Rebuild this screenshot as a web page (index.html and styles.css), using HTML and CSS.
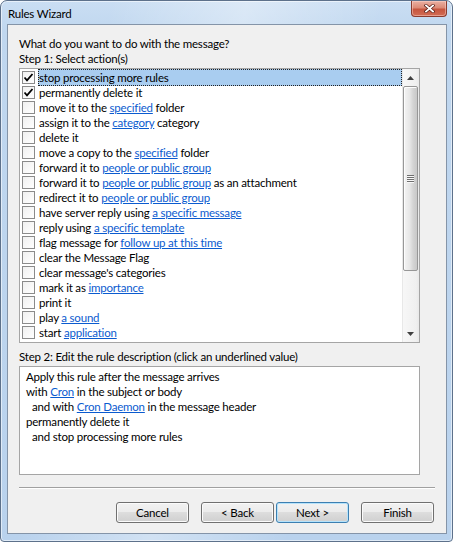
FILE: index.html
```html
<!DOCTYPE html>
<html>
<head>
<meta charset="utf-8">
<title>Rules Wizard</title>
<link rel="stylesheet" href="styles.css">
</head>
<body>
<div class="window">
  <div class="titlebar">
    <span class="title">Rules Wizard</span>
    <div class="close">
      <svg width="11" height="9" viewBox="0 0 11 9">
        <path d="M2 1.5 L9 7.5 M9 1.5 L2 7.5" stroke="#5a2018" stroke-width="3.2" stroke-linecap="square"/>
        <path d="M2 1.5 L9 7.5 M9 1.5 L2 7.5" stroke="#ffffff" stroke-width="1.8" stroke-linecap="square"/>
      </svg>
    </div>
  </div>
  <div class="client">
    <div class="label">What do you want to do with the message?</div>
    <div class="label">Step 1: Select action(s)</div>
    <div class="listbox">
      <ul class="items">
        <li class="item"><span class="cb checked"><svg width="11" height="11" viewBox="0 0 11 11"><path d="M1.5 5.5 L4 8.3 L9.5 2" fill="none" stroke="#000" stroke-width="1.8"/></svg></span><span class="txt selected">stop processing more rules</span></li>
        <li class="item"><span class="cb checked"><svg width="11" height="11" viewBox="0 0 11 11"><path d="M1.5 5.5 L4 8.3 L9.5 2" fill="none" stroke="#000" stroke-width="1.8"/></svg></span><span class="txt">permanently delete it</span></li>
        <li class="item"><span class="cb"></span><span class="txt">move it to the <a class="lnk">specified</a> folder</span></li>
        <li class="item"><span class="cb"></span><span class="txt">assign it to the <a class="lnk">category</a> category</span></li>
        <li class="item"><span class="cb"></span><span class="txt">delete it</span></li>
        <li class="item"><span class="cb"></span><span class="txt">move a copy to the <a class="lnk">specified</a> folder</span></li>
        <li class="item"><span class="cb"></span><span class="txt">forward it to <a class="lnk">people or public group</a></span></li>
        <li class="item"><span class="cb"></span><span class="txt">forward it to <a class="lnk">people or public group</a> as an attachment</span></li>
        <li class="item"><span class="cb"></span><span class="txt">redirect it to <a class="lnk">people or public group</a></span></li>
        <li class="item"><span class="cb"></span><span class="txt">have server reply using <a class="lnk">a specific message</a></span></li>
        <li class="item"><span class="cb"></span><span class="txt">reply using <a class="lnk">a specific template</a></span></li>
        <li class="item"><span class="cb"></span><span class="txt">flag message for <a class="lnk">follow up at this time</a></span></li>
        <li class="item"><span class="cb"></span><span class="txt">clear the Message Flag</span></li>
        <li class="item"><span class="cb"></span><span class="txt">clear message's categories</span></li>
        <li class="item"><span class="cb"></span><span class="txt">mark it as <a class="lnk">importance</a></span></li>
        <li class="item"><span class="cb"></span><span class="txt">print it</span></li>
        <li class="item"><span class="cb"></span><span class="txt">play <a class="lnk">a sound</a></span></li>
        <li class="item"><span class="cb"></span><span class="txt">start <a class="lnk">application</a></span></li>
      </ul>
      <div class="scrollbar">
        <div class="sb-btn"><svg width="7" height="4" viewBox="0 0 7 4"><path d="M0 4 L3.5 0 L7 4 Z" fill="#404040"/></svg></div>
        <div class="thumb">
          <div class="grip"><i></i><i></i><i></i><i></i></div>
        </div>
        <div class="track"></div>
        <div class="sb-btn"><svg width="7" height="4" viewBox="0 0 7 4"><path d="M0 0 L7 0 L3.5 4 Z" fill="#404040"/></svg></div>
      </div>
    </div>
    <div class="label step2">Step 2: Edit the rule description (click an underlined value)</div>
    <div class="desc">
      <div class="dline">Apply this rule after the message arrives</div>
      <div class="dline">with <a class="lnk">Cron</a> in the subject or body</div>
      <div class="dline indent">and with <a class="lnk">Cron Daemon</a> in the message header</div>
      <div class="dline">permanently delete it</div>
      <div class="dline indent">and stop processing more rules</div>
    </div>
    <div class="sep"></div>
    <div class="buttons">
      <button class="btn">Cancel</button>
      <button class="btn back">&lt; Back</button>
      <button class="btn next">Next &gt;</button>
      <button class="btn">Finish</button>
    </div>
  </div>
</div>
</body>
</html>
```
FILE: styles.css
```css
html, body {
  margin: 0;
  padding: 0;
  background: #ffffff;
}

body {
  font-family: Lato, "Open Sans", sans-serif;
  font-size: 11.5px;
  letter-spacing: -0.2px;
  color: #000;
}

.window {
  width: 453px;
  height: 542px;
  box-sizing: border-box;
  border: 1px solid #5d718b;
  border-radius: 7px 7px 4px 4px;
  background:
    linear-gradient(100deg, rgba(255,255,255,0) 20%, rgba(255,255,255,0.35) 45%, rgba(255,255,255,0) 70%),
    linear-gradient(to bottom, #cadef3 0, #c0d7ef 30px, #b9d2ed 100%);
  box-shadow: inset 0 0 0 1px rgba(255,255,255,0.55);
  display: flex;
  flex-direction: column;
  overflow: hidden;
}

.titlebar {
  height: 23px;
  flex: none;
  display: flex;
  align-items: flex-start;
  padding-left: 7px;
}

.title {
  margin-top: 5px;
  line-height: 15px;
  color: #000;
}

.close {
  margin-left: auto;
  margin-right: 5px;
  width: 36px;
  height: 16px;
  box-sizing: border-box;
  border: 1px solid #8a3b2e;
  border-top: none;
  border-radius: 0 0 4px 4px;
  background: linear-gradient(to bottom, #eab0a2 0, #dc8a76 45%, #c6553e 55%, #d26d55 100%);
  box-shadow: inset 0 0 0 1px rgba(255,220,210,0.45);
  display: flex;
  align-items: center;
  justify-content: center;
}

.client {
  margin: 0 5px 0 6px;
  height: 510px;
  flex: none;
  box-sizing: border-box;
  border: 1px solid #8494a8;
  background: #f0f0f0;
  padding: 11px 11px 10px 11px;
}

.label {
  height: 15px;
  line-height: 15px;
  white-space: nowrap;
}

.step2 {
  margin-top: 6px;
}

.listbox {
  margin-top: 2px;
  width: 401px;
  height: 275px;
  box-sizing: border-box;
  border: 1px solid #a5a5a5;
  background: #fff;
  display: flex;
}

.items {
  flex: 1;
  list-style: none;
  margin: 0;
  padding: 1px 0 0 2px;
}

.item {
  height: 15px;
  display: flex;
  align-items: center;
  white-space: nowrap;
}

.cb {
  width: 13px;
  height: 13px;
  box-sizing: border-box;
  border: 1px solid #8b8b8b;
  background: linear-gradient(135deg, #f0f0f0, #ffffff);
  flex: none;
  display: flex;
  align-items: center;
  justify-content: center;
}

.cb svg {
  display: block;
}

.txt {
  margin-left: 3px;
  padding-left: 1px;
  line-height: 15px;
}

.txt.selected {
  flex: 1;
  align-self: stretch;
  margin-top: -1px;
  margin-bottom: -1px;
  line-height: 17px;
  background: #a9cdf0;
  outline: 1px dotted #222;
  outline-offset: -1px;
}

.lnk {
  color: #0b5bcf;
  text-decoration: underline;
}

.scrollbar {
  width: 17px;
  flex: none;
  display: flex;
  flex-direction: column;
  background: linear-gradient(to right, #e8e8e8 0, #e8e8e8 1px, #f7f7f7 1px, #f0f0f0 14px, #e9e9e9 17px);
}

.sb-btn {
  height: 17px;
  flex: none;
  display: flex;
  align-items: center;
  justify-content: center;
}

.sb-btn svg {
  display: block;
}

.thumb {
  height: 185px;
  flex: none;
  margin: 0 1px 0 1px;
  box-sizing: border-box;
  border: 1px solid #979797;
  border-radius: 2px;
  background: linear-gradient(to right, #f4f4f4 0, #e6e6e6 45%, #d4d4d4 70%, #c8c8c8 100%);
  box-shadow: inset 1px 1px 0 #fdfdfd;
  display: flex;
  align-items: center;
  justify-content: center;
}

.grip {
  display: flex;
  flex-direction: column;
  gap: 1px;
}

.grip i {
  display: block;
  width: 7px;
  height: 1px;
  background: #6f6f6f;
  box-shadow: 0 1px 0 #f8f8f8;
}

.track {
  flex: 1;
}

.desc {
  margin-top: 2px;
  width: 401px;
  height: 109px;
  box-sizing: border-box;
  border: 1px solid #a5a5a5;
  background: #fff;
  padding: 2px 6px;
}

.dline {
  height: 15px;
  line-height: 15px;
  white-space: nowrap;
}

.dline.indent {
  padding-left: 6px;
}

.sep {
  margin-top: 12px;
  height: 0;
  border-top: 1px solid #a0a0a0;
  border-bottom: 1px solid #ffffff;
}

.buttons {
  margin-top: 13px;
  display: flex;
  justify-content: flex-end;
  padding-right: 1px;
}

.btn {
  width: 73px;
  height: 21px;
  margin: 0 0 0 12px;
  padding: 0;
  box-sizing: border-box;
  border: 1px solid #707070;
  border-radius: 3px;
  background: linear-gradient(to bottom, #f2f2f2 0, #ebebeb 50%, #dddddd 50%, #cfcfcf 100%);
  box-shadow: inset 0 0 0 1px #fbfbfb;
  font-family: Lato, "Open Sans", sans-serif;
  font-size: 11.5px;
  letter-spacing: -0.2px;
  color: #000;
  line-height: 19px;
}

.btn.next {
  margin-left: 2px;
  border-color: #3c7fb1;
  box-shadow: inset 0 0 0 1px #b6e3fb;
}
```
